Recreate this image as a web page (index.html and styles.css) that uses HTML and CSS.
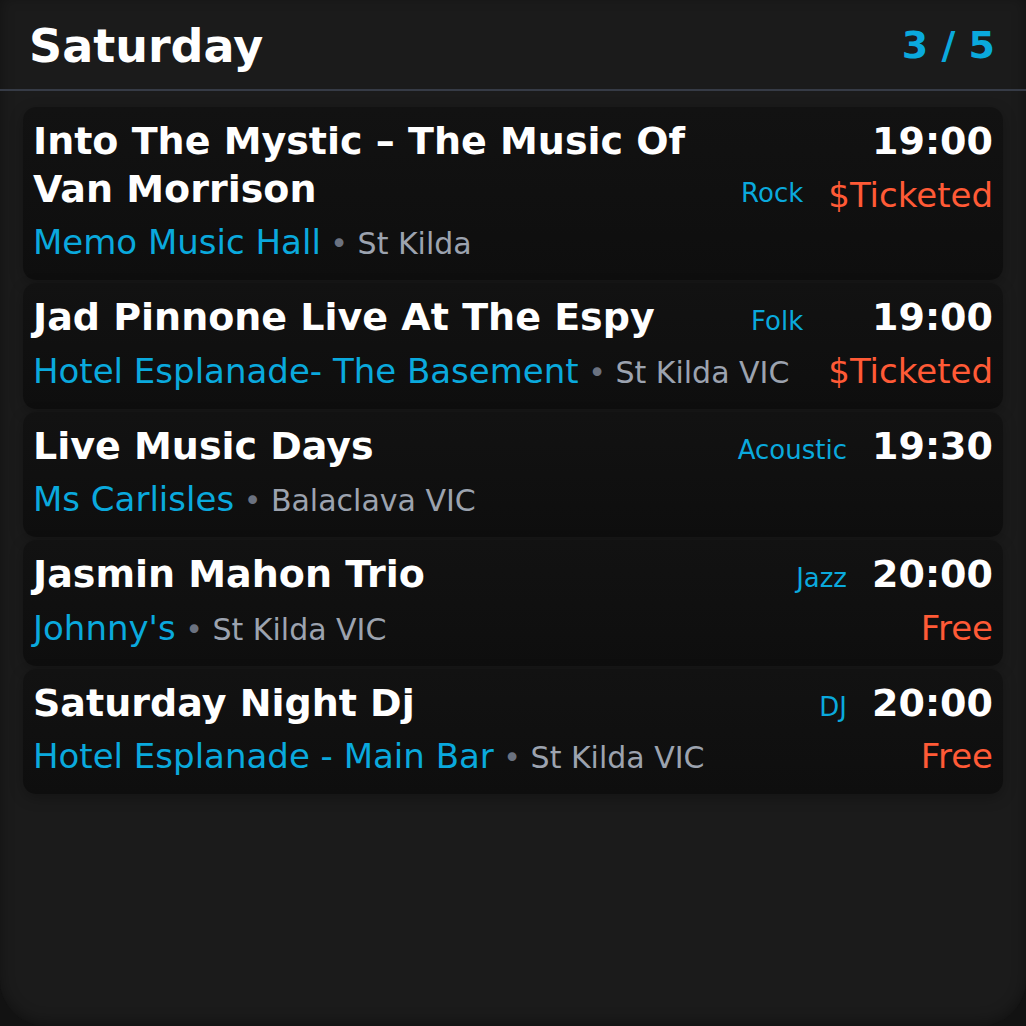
FILE: index.html
```html
<!DOCTYPE html>
<html>
<head>
<meta charset="utf-8">
<link rel="stylesheet" href="styles.css">
</head>
<body>
<div class="screen">
  <header class="top">
    <h1 class="day">Saturday</h1>
    <div class="pager">3 / 5</div>
  </header>
  <main class="list">
    <article class="card">
      <div class="main">
        <div class="head">
          <div class="title">Into The Mystic – The Music Of Van Morrison</div>
          <div class="genre">Rock</div>
        </div>
        <div class="place"><span class="venue">Memo Music Hall</span><span class="dot"> • </span><span class="loc">St Kilda</span></div>
      </div>
      <div class="side">
        <div class="time">19:00</div>
        <div class="price">$Ticketed</div>
      </div>
    </article>
    <article class="card">
      <div class="main">
        <div class="head">
          <div class="title">Jad Pinnone Live At The Espy</div>
          <div class="genre">Folk</div>
        </div>
        <div class="place"><span class="venue">Hotel Esplanade- The Basement</span><span class="dot"> • </span><span class="loc">St Kilda VIC</span></div>
      </div>
      <div class="side">
        <div class="time">19:00</div>
        <div class="price">$Ticketed</div>
      </div>
    </article>
    <article class="card">
      <div class="main">
        <div class="head">
          <div class="title">Live Music Days</div>
          <div class="genre">Acoustic</div>
        </div>
        <div class="place"><span class="venue">Ms Carlisles</span><span class="dot"> • </span><span class="loc">Balaclava VIC</span></div>
      </div>
      <div class="side">
        <div class="time">19:30</div>
      </div>
    </article>
    <article class="card">
      <div class="main">
        <div class="head">
          <div class="title">Jasmin Mahon Trio</div>
          <div class="genre">Jazz</div>
        </div>
        <div class="place"><span class="venue">Johnny's</span><span class="dot"> • </span><span class="loc">St Kilda VIC</span></div>
      </div>
      <div class="side">
        <div class="time">20:00</div>
        <div class="price">Free</div>
      </div>
    </article>
    <article class="card">
      <div class="main">
        <div class="head">
          <div class="title">Saturday Night Dj</div>
          <div class="genre">DJ</div>
        </div>
        <div class="place"><span class="venue">Hotel Esplanade - Main Bar</span><span class="dot"> • </span><span class="loc">St Kilda VIC</span></div>
      </div>
      <div class="side">
        <div class="time">20:00</div>
        <div class="price">Free</div>
      </div>
    </article>
  </main>
</div>
</body>
</html>
```

FILE: styles.css
```css
* { box-sizing: border-box; }
html, body {
  margin: 0;
  padding: 0;
  background: #121212;
}
body {
  font-family: "DejaVu Sans", sans-serif;
  color: #ffffff;
}
.screen {
  width: 1026px;
  height: 1026px;
  background: #1b1b1b;
  border-radius: 0 0 46px 46px;
  box-shadow: inset 0 -4px 14px rgba(0, 0, 0, 0.35);
  overflow: hidden;
}
.top {
  height: 91px;
  display: flex;
  align-items: center;
  justify-content: space-between;
  padding: 0 31px 0 29px;
  border-bottom: 2px solid #363b46;
}
.day {
  margin: 0;
  font-size: 46px;
  font-weight: bold;
  line-height: 1;
  padding-top: 3px;
}
.pager {
  font-size: 38px;
  font-weight: bold;
  color: #0aa9dd;
  line-height: 1;
}
.list {
  padding: 16px 23px 0 23px;
  display: flex;
  flex-direction: column;
  gap: 3px;
}
.card {
  display: flex;
  align-items: flex-start;
  padding: 11px 10px 14.5px 10px;
  border-radius: 13px;
  background: linear-gradient(#121212, #0e0e0e);
  box-shadow: 0 4px 14px rgba(0, 0, 0, 0.25);
}
.main {
  flex: 1 1 auto;
  min-width: 0;
  display: flex;
  flex-direction: column;
  gap: 8px;
}
.head {
  display: flex;
  justify-content: space-between;
  align-items: last baseline;
  gap: 24px;
}
.title {
  font-size: 38px;
  font-weight: bold;
  line-height: 47.5px;
  min-width: 0;
}
.genre {
  font-size: 26px;
  line-height: 32px;
  color: #0aa9dd;
  white-space: nowrap;
}
.place {
  font-size: 30px;
  line-height: 42.5px;
  white-space: nowrap;
}
.venue {
  font-size: 34px;
  color: #0aa9dd;
}
.dot {
  color: #6b7280;
}
.loc {
  color: #9ca3af;
}
.side {
  flex: 0 0 auto;
  margin-left: 25px;
  display: flex;
  flex-direction: column;
  align-items: flex-end;
  gap: 8px;
}
.time {
  font-size: 38px;
  font-weight: bold;
  line-height: 47.5px;
}
.price {
  font-size: 34px;
  line-height: 42.5px;
  color: #ff5a36;
}
```
